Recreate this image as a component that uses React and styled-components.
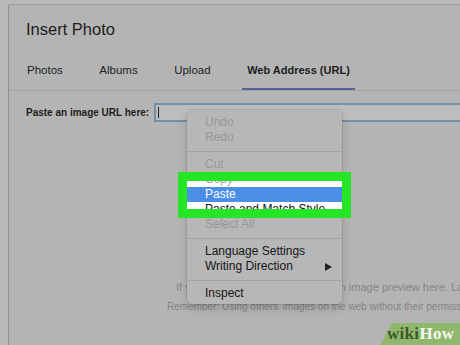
import React from "react";
import styled, { createGlobalStyle } from "styled-components";

const Global = createGlobalStyle`
  html, body { margin: 0; padding: 0; background: #bababa; }
  body { font-family: "Liberation Sans", Arial, sans-serif; }
`;

const Page = styled.div`
  position: relative;
  width: 460px;
  height: 345px;
  overflow: hidden;
  box-sizing: border-box;
  padding: 4px 0 0 8px;
  background: #bababa;
`;

const Dialog = styled.div`
  width: 640px;
  height: 420px;
  background: #b4b4b4;
  border-top: 1px solid #9c9c9c;
  border-left: 1px solid #8e8e8e;
  border-top-left-radius: 2px;
  display: flex;
  flex-direction: column;
`;

const Title = styled.h1`
  margin: 0;
  padding: 15px 0 0 17px;
  font-size: 16.5px;
  line-height: 19px;
  font-weight: 400;
  color: #1d1d1d;
`;

const TabBar = styled.div`
  display: flex;
  gap: 26.5px;
  padding-left: 13px;
  border-bottom: 1px solid #a5a5a5;
`;

const Tab = styled.div`
  padding: 24px 5px 11px;
  font-size: ${(p) => (p.$active ? "11px" : "11.5px")};
  line-height: 14px;
  font-weight: ${(p) => (p.$active ? 700 : 400)};
  color: #1d1d1d;
  border-bottom: 2px solid ${(p) => (p.$active ? "#5b5f98" : "transparent")};
`;

const FormRow = styled.div`
  display: flex;
  align-items: center;
  gap: 5px;
  padding: 12px 0 0 17px;
`;

const Label = styled.label`
  font-size: 10px;
  font-weight: 700;
  color: #1d1d1d;
  white-space: nowrap;
`;

const UrlInput = styled.div`
  flex: 1;
  height: 19px;
  box-sizing: border-box;
  border: 2px solid #7190aa;
  background: #bdbdbd;
  display: flex;
  align-items: center;
  padding-left: 2px;
`;

const Caret = styled.span`
  width: 1px;
  height: 11px;
  background: #222;
`;

const Preview = styled.div`
  display: flex;
  flex-direction: column;
  gap: 6px;
  padding-top: 158px;
`;

const Hint = styled.p`
  margin: 0;
  padding-left: ${(p) => p.$indent}px;
  font-size: ${(p) => p.$size}px;
  line-height: ${(p) => p.$lh}px;
  color: #848484;
  white-space: nowrap;
`;

const Menu = styled.div`
  position: absolute;
  left: 187px;
  top: 110px;
  width: 155px;
  box-sizing: border-box;
  padding: 5px 0 3px;
  background: #b7b7b7;
  border-radius: 5px;
  box-shadow: 0 0 0 1px rgba(0, 0, 0, 0.07), 0 4px 10px rgba(0, 0, 0, 0.16);
`;

const Item = styled.div`
  height: 15px;
  line-height: 15px;
  padding: 0 10px 0 18px;
  font-size: 12px;
  display: flex;
  justify-content: space-between;
  align-items: center;
  white-space: nowrap;
  color: ${(p) =>
    p.$selected ? "#ffffff" : p.$disabled ? (p.$bright ? "#a8a8a8" : "#979797") : "#161616"};
  background: ${(p) => (p.$selected ? "#4b8ee8" : "transparent")};
`;

const Sep = styled.div`
  height: 1px;
  margin: 5.5px 0;
  background: #a4a4a4;
`;

const Highlight = styled.div`
  position: absolute;
  left: 178px;
  top: 172px;
  width: 173px;
  height: 46px;
  box-sizing: border-box;
  border: 9px solid #24e624;
  background: #ffffff;
  overflow: hidden;
`;

const HighlightRows = styled.div`
  margin-top: -9px;
`;

const Watermark = styled.div`
  position: absolute;
  right: 0;
  bottom: 0;
  width: 80px;
  height: 22px;
  box-sizing: border-box;
  padding-left: 7px;
  background: #8fb86e;
  clip-path: polygon(12px 0, 100% 0, 100% 100%, 0 100%);
  display: flex;
  align-items: center;
  font-family: "Liberation Serif", "Times New Roman", serif;
  font-weight: 700;
  font-size: 17px;
  letter-spacing: 0.3px;
`;

const WikiPart = styled.span`
  color: ${(p) => p.$tone};
`;

const Arrow = () => (
  <svg width="7" height="8" viewBox="0 0 7 8">
    <polygon points="0,0 7,4 0,8" fill="#222" />
  </svg>
);

export default function App() {
  return (
    <>
      <Global />
      <Page>
        <Dialog>
          <Title>Insert Photo</Title>
          <TabBar>
            <Tab>Photos</Tab>
            <Tab>Albums</Tab>
            <Tab>Upload</Tab>
            <Tab $active>Web Address (URL)</Tab>
          </TabBar>
          <FormRow>
            <Label>Paste an image URL here:</Label>
            <UrlInput>
              <Caret />
            </UrlInput>
          </FormRow>
          <Preview>
            <Hint $indent={167} $size={11} $lh={14}>
              If your URL is correct, you'll see an image preview here. Large images may take a few minutes to appear.
            </Hint>
            <Hint $indent={158} $size={10} $lh={13}>
              Remember: Using others' images on the web without their permission may be bad manners, or worse, copyright infringement.
            </Hint>
          </Preview>
        </Dialog>

        <Menu>
          <Item $disabled>Undo</Item>
          <Item $disabled>Redo</Item>
          <Sep />
          <Item $disabled>Cut</Item>
          <Item $disabled>Copy</Item>
          <Item>Paste</Item>
          <Item>Paste and Match Style</Item>
          <Item $disabled>Select All</Item>
          <Sep />
          <Item>Language Settings</Item>
          <Item>
            Writing Direction
            <Arrow />
          </Item>
          <Sep />
          <Item>Inspect</Item>
        </Menu>

        <Highlight>
          <HighlightRows>
            <Item $disabled $bright>Copy</Item>
            <Item $selected>Paste</Item>
            <Item>Paste and Match Style</Item>
          </HighlightRows>
        </Highlight>

        <Watermark>
          <WikiPart $tone="#3b5a27">wiki</WikiPart>
          <WikiPart $tone="#f3f7ee">How</WikiPart>
        </Watermark>
      </Page>
    </>
  );
}
